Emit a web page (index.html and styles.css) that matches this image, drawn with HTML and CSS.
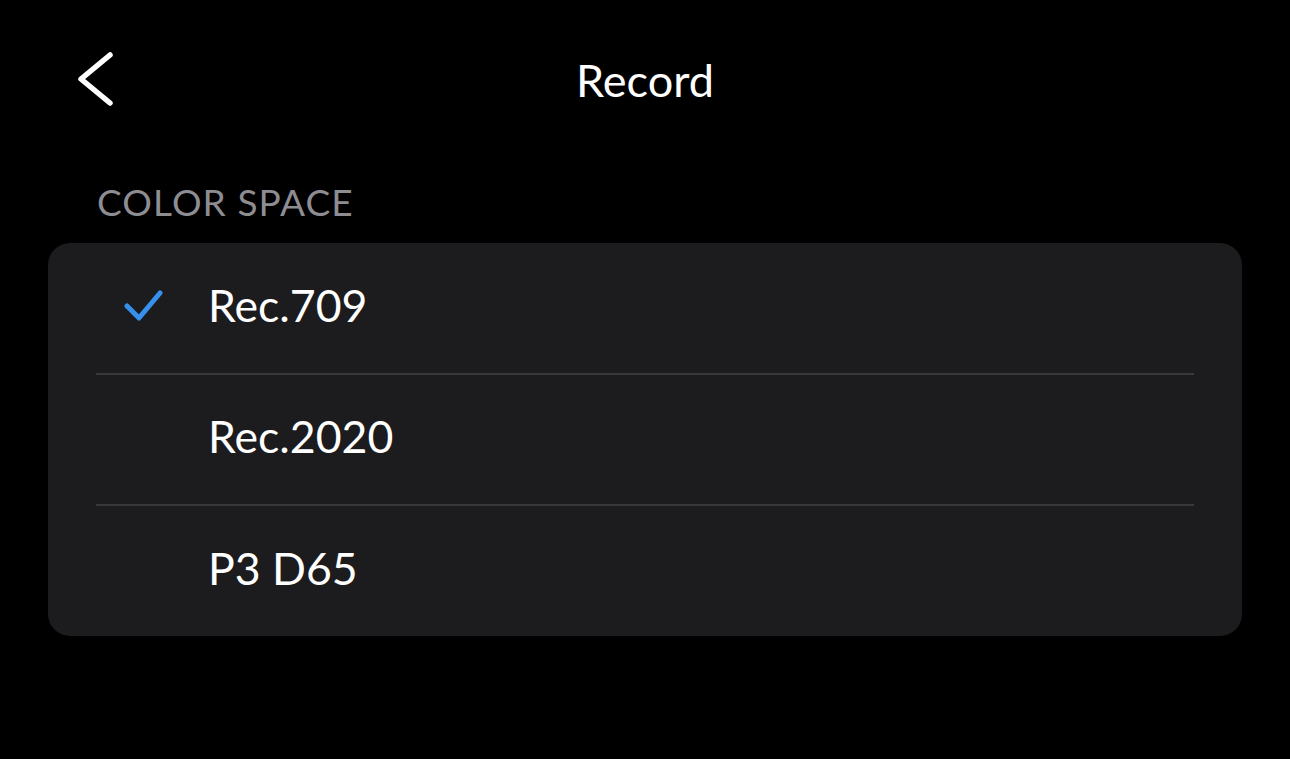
FILE: index.html
```html
<!DOCTYPE html>
<html lang="en">
<head>
  <meta charset="UTF-8">
  <title>Record - Color Space</title>
  <link rel="stylesheet" href="styles.css">
</head>
<body>
  <header class="navbar">
    <button class="back" aria-label="Back">
      <svg width="44" height="62" viewBox="0 0 44 62">
        <path d="M36 7 L7 31 L36 55" fill="none" stroke="#fff" stroke-width="5.5" stroke-linecap="round" stroke-linejoin="round"/>
      </svg>
    </button>
    <h1>Record</h1>
    <span></span>
  </header>

  <section class="group">
    <h2 class="group-title">COLOR SPACE</h2>
    <ul class="list">
      <li class="row">
        <span class="check">
          <svg width="40" height="34" viewBox="0 0 40 34">
            <path d="M4 18 L16 30 L37 5" fill="none" stroke="#3790ee" stroke-width="5" stroke-linecap="round" stroke-linejoin="round"/>
          </svg>
        </span>
        <span class="label">Rec.709</span>
      </li>
      <li class="row">
        <span class="check"></span>
        <span class="label">Rec.2020</span>
      </li>
      <li class="row">
        <span class="check"></span>
        <span class="label">P3 D65</span>
      </li>
    </ul>
  </section>
</body>
</html>
```

FILE: styles.css
```css
body {
  margin: 0;
  background: #000;
  color: #fff;
  font-family: 'Lato', 'Noto Sans', sans-serif;
}
.navbar {
  display: grid;
  grid-template-columns: 1fr auto 1fr;
  align-items: center;
  height: 160px;
  padding: 0 0 0 74px;
}
.back {
  justify-self: start;
  background: none;
  border: none;
  padding: 0;
  margin-top: -2px;
  display: flex;
  cursor: pointer;
}
.navbar h1 {
  margin: 0 0 0 -74px;
  font-size: 45px;
  font-weight: 400;
  line-height: 56px;
}
.group {
  padding: 0 48px;
}
.group-title {
  margin: 20px 0 19px 49px;
  font-size: 37px;
  font-weight: 400;
  line-height: 44px;
  letter-spacing: 1.1px;
  color: #8d8d92;
}
.list {
  list-style: none;
  margin: 0;
  padding: 0;
  background: #1c1c1e;
  border-radius: 22px;
}
.row {
  display: flex;
  align-items: center;
  height: 129.5px;
  margin: 0 48px;
  border-bottom: 2px solid #38383a;
}
.row:last-child {
  border-bottom: none;
}
.check {
  width: 112px;
  flex-shrink: 0;
  display: flex;
  padding-left: 27px;
  margin-top: -6px;
  box-sizing: border-box;
}
.label {
  font-size: 44.6px;
  line-height: 56px;
  padding-bottom: 6px;
}
```
